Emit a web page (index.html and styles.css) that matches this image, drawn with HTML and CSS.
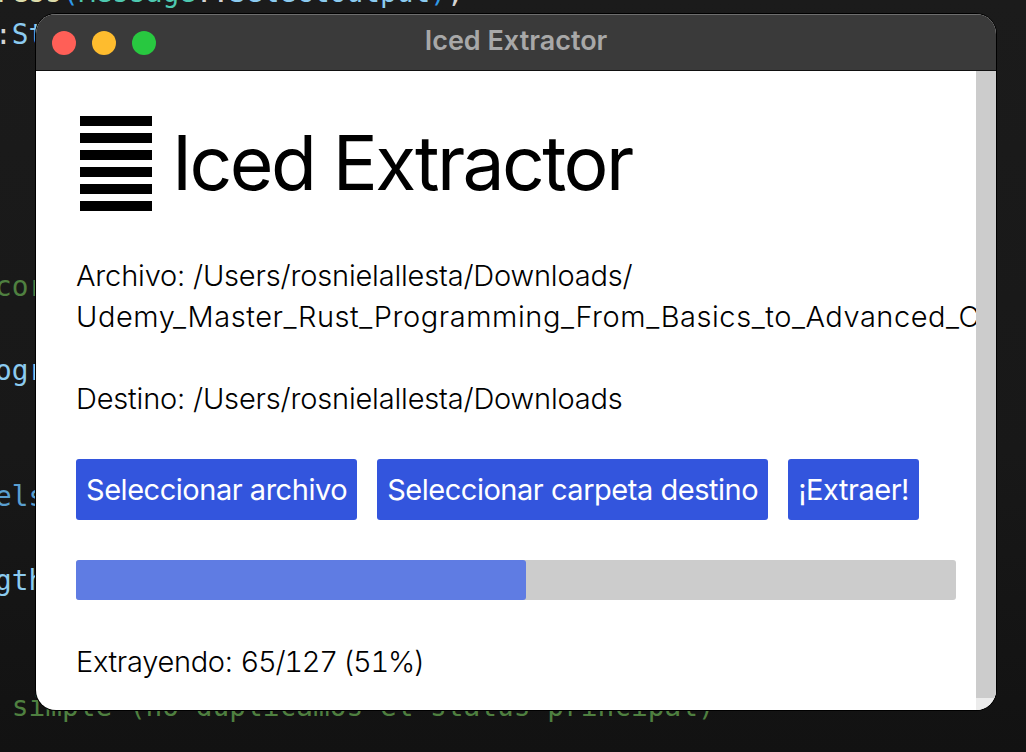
FILE: index.html
```html
<!DOCTYPE html>
<html lang="es">
<head>
    <meta charset="UTF-8">
    <title>Iced Extractor</title>
    <link rel="stylesheet" href="styles.css">
</head>
<body>
    <!-- editor behind the window -->
    <div class="editor">
        <div class="line"><span class="fn">ress</span><span class="paren">(</span><span class="type">Message</span><span class="punct">::</span><span class="var">SelectOutput</span><span class="paren">)</span><span class="punct">;</span></div>
        <div class="line"><span class="punct">:</span><span class="var">String</span></div>
        <div class="line"></div>
        <div class="line"></div>
        <div class="line"></div>
        <div class="line"></div>
        <div class="line"></div>
        <div class="line"><span class="comment">cor</span></div>
        <div class="line"></div>
        <div class="line"><span class="var">ogress</span></div>
        <div class="line"></div>
        <div class="line"></div>
        <div class="line"><span class="keyword">else</span></div>
        <div class="line"></div>
        <div class="line"><span class="var">gth</span></div>
        <div class="line"></div>
        <div class="line"></div>
        <div class="line"><span class="comment"> simple (no duplicamos el status principal)</span></div>
    </div>

    <div class="window">
        <div class="titlebar">
            <div class="lights">
                <span class="light red"></span>
                <span class="light yellow"></span>
                <span class="light green"></span>
            </div>
            <div class="window-title">Iced Extractor</div>
        </div>
        <div class="window-body">
            <div class="content">
                <div class="header">
                    <svg class="logo" width="72" height="95" viewBox="0 0 72 95">
                        <rect y="0" width="72" height="10"/>
                        <rect y="17" width="72" height="10"/>
                        <rect y="34" width="72" height="10"/>
                        <rect y="51" width="72" height="10"/>
                        <rect y="68" width="72" height="10"/>
                        <rect y="85" width="72" height="10"/>
                    </svg>
                    <h1>Iced Extractor</h1>
                </div>
                <div class="paths">
                    <div>Archivo: /Users/rosnielallesta/Downloads/</div>
                    <div class="file-name">Udemy_Master_Rust_Programming_From_Basics_to_Advanced_Concepts.zip</div>
                    <div class="blank"></div>
                    <div>Destino: /Users/rosnielallesta/Downloads</div>
                </div>
                <div class="buttons">
                    <button>Seleccionar archivo</button>
                    <button>Seleccionar carpeta destino</button>
                    <button>¡Extraer!</button>
                </div>
                <div class="progress">
                    <div class="progress-fill" style="width: 51.1%"></div>
                </div>
                <div class="status">Extrayendo: <span class="count">65/127 (51%)</span></div>
            </div>
            <div class="scroll-track">
                <div class="scrollbar"></div>
            </div>
        </div>
    </div>
</body>
</html>
```

FILE: styles.css
```css
body {
    margin: 0;
    width: 1026px;
    height: 752px;
    overflow: hidden;
    position: relative;
    background: linear-gradient(180deg, #1b1b1b 0%, #181818 60%, #121212 100%);
    font-family: Inter, "Liberation Sans", sans-serif;
}

.editor {
    margin-top: -28px;
    margin-left: -5px;
    font-family: "DejaVu Sans Mono", monospace;
    font-size: 27.8px;
}
.line {
    height: 42px;
    line-height: 42px;
    white-space: pre;
}
.fn { color: #dcdcaa; }
.paren { color: #2f9ae8; }
.type { color: #4ec9b0; }
.punct { color: #d4d4d4; }
.var { color: #8ccbf0; }
.comment { color: #4f8040; }
.keyword { color: #5a9fd0; }

/* the window sits on top of the editor */
.window {
    position: absolute;
    left: 36px;
    top: 14px;
    width: 960px;
    height: 696px;
    border-radius: 20px;
    overflow: hidden;
    display: flex;
    flex-direction: column;
    background: #fff;
    box-shadow: 0 0 0 1px #000;
}
.titlebar {
    height: 57px;
    flex-shrink: 0;
    box-sizing: border-box;
    display: flex;
    align-items: center;
    position: relative;
    background: #3a3a3a;
    border-top: 1px solid #6e6e6e;
    border-bottom: 1px solid #111;
}
.lights {
    display: flex;
    gap: 16px;
    padding-left: 16px;
}
.light {
    width: 24px;
    height: 24px;
    border-radius: 50%;
}
.red { background: #ff5f57; }
.yellow { background: #febc2e; }
.green { background: #28c840; }
.window-title {
    position: absolute;
    left: 0;
    right: 0;
    top: 11px;
    text-align: center;
    font-size: 27px;
    line-height: 30px;
    font-weight: 600;
    color: #a8a8a8;
}

.window-body {
    flex-grow: 1;
    display: flex;
    min-height: 0;
}
.content {
    width: 940px;
    box-sizing: border-box;
    padding: 40px 20px 0 40px;
    overflow: hidden;
    display: flex;
    flex-direction: column;
    flex-shrink: 0;
    color: #000;
    font-size: 29px;
    font-weight: 300;
    line-height: 41px;
    letter-spacing: -0.18px;
}
.header {
    display: flex;
    align-items: center;
    gap: 20px;
    padding-left: 4px;
    height: 110px;
    margin-top: -3px;
}
.logo {
    flex-shrink: 0;
}
h1 {
    margin: 0;
    font-size: 75px;
    font-weight: 400;
    line-height: 96px;
    letter-spacing: -2.6px;
    white-space: nowrap;
}
.paths {
    margin-top: 37px;
    white-space: nowrap;
}
.file-name {
    letter-spacing: 0.55px;
}
.blank {
    height: 41px;
}
.buttons {
    display: flex;
    gap: 20px;
    margin-top: 40px;
}
button {
    height: 61px;
    padding: 0 10px;
    border: 0;
    border-radius: 3px;
    background: #3355dd;
    color: #fff;
    font-family: inherit;
    font-size: 29px;
    font-weight: 400;
    letter-spacing: -0.47px;
    white-space: nowrap;
}
.progress {
    height: 40px;
    margin-top: 40px;
    width: 880px;
    border-radius: 3px;
    background: #ccc;
    flex-shrink: 0;
}
.progress-fill {
    height: 100%;
    border-radius: 3px;
    background: #5f7ce3;
}
.status {
    margin-top: 41px;
    letter-spacing: -0.3px;
}
.count {
    font-variant-numeric: tabular-nums;
    letter-spacing: -1.3px;
}
.scroll-track {
    width: 20px;
    background: #ececec;
    flex-shrink: 0;
}
.scrollbar {
    height: 627px;
    background: #ccc;
}
```
